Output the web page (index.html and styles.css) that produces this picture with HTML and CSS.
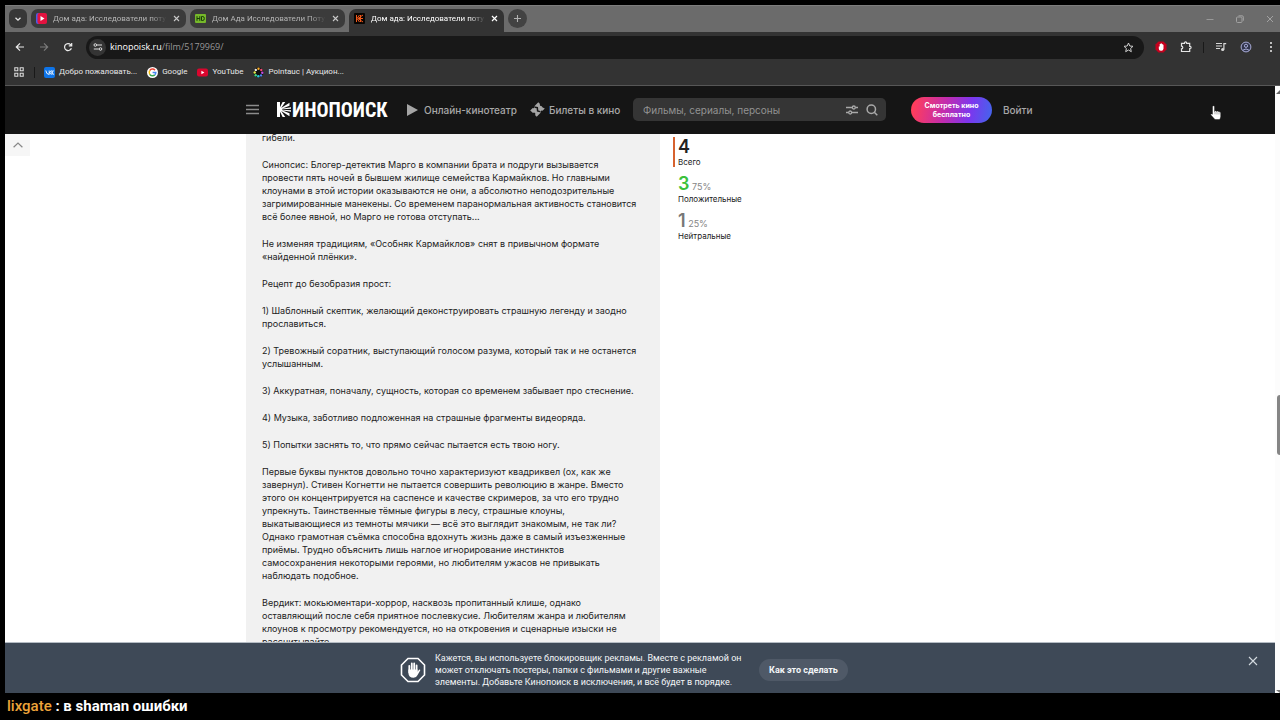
FILE: index.html
```html
<!DOCTYPE html>
<html lang="ru">
<head>
<meta charset="utf-8">
<meta name="viewport" content="width=device-width, initial-scale=1">
<title>Дом ада: Исследователи потустороннего — Кинопоиск</title>
<link rel="stylesheet" href="styles.css">
</head>
<body>
<div class="browser">
  <div class="tabstrip">
    <button class="tab-search" aria-label="Поиск вкладок"><svg width="8" height="8" viewBox="0 0 8 8"><path d="M1.5 2.7 4 5.2l2.500-2.500" fill="none" stroke="#e6e6e6" stroke-width="1.300"/></svg></button>
    <div class="tabs">
      <div class="tab">
        <svg class="favicon" width="11" height="11" viewBox="0 0 11 11"><rect width="8" height="11" rx="2" fill="#4b5ce8"/><rect x="1.500" width="9.500" height="11" rx="2" fill="#e3123f"/><path d="M4.500 3v5l4-2.500z" fill="#fff"/></svg>
        <span class="tab-title">Дом ада: Исследователи поту</span>
        <button class="tab-close" aria-label="Закрыть вкладку"><svg width="7" height="7" viewBox="0 0 7 7"><path d="M1 1l5 5M6 1 1 6" stroke="#c8c8c8" stroke-width="1.100"/></svg></button>
      </div>
      <div class="tab">
        <svg class="favicon" width="11" height="11" viewBox="0 0 11 11"><rect y="1" width="11" height="9" rx="1" fill="#76b82a"/><path d="M2 3.200v4.600M4.800 3.200v4.600M2 5.500h2.800M6.500 3.500v4h1.300q1.500 0 1.500-2t-1.500-2z" fill="none" stroke="#173c08" stroke-width="1"/></svg>
        <span class="tab-title">Дом Ада Исследователи Поту</span>
        <button class="tab-close" aria-label="Закрыть вкладку"><svg width="7" height="7" viewBox="0 0 7 7"><path d="M1 1l5 5M6 1 1 6" stroke="#c8c8c8" stroke-width="1.100"/></svg></button>
      </div>
      <div class="tab tab-active">
        <svg class="favicon" width="11" height="11" viewBox="0 0 11 11"><rect width="11" height="11" rx="1" fill="#080503"/><path d="M2.500 2v7M3 5.500 5.500 2M3 5.500 5.500 9M4 5.500 9 2M4 5.500h5M4 5.500 9 9M6.500 2v7" stroke="#f0581a" stroke-width="1"/></svg>
        <span class="tab-title">Дом ада: Исследователи поту</span>
        <button class="tab-close" aria-label="Закрыть вкладку"><svg width="7" height="7" viewBox="0 0 7 7"><path d="M1 1l5 5M6 1 1 6" stroke="#fff" stroke-width="1.200"/></svg></button>
      </div>
    </div>
    <button class="new-tab" aria-label="Новая вкладка"><svg width="9" height="9" viewBox="0 0 9 9"><path d="M4.500 1v7M1 4.500h7" stroke="#b0b0b0" stroke-width="1.100"/></svg></button>
    <div class="window-controls">
      <button aria-label="Свернуть"><svg width="8" height="8" viewBox="0 0 8 8"><path d="M.5 4.500h7" stroke="#999"/></svg></button>
      <button aria-label="Восстановить"><svg width="8" height="8" viewBox="0 0 8 8"><rect x=".5" y="2" width="5.500" height="5.500" rx="1" fill="none" stroke="#a2a2a2"/><path d="M2.500.8h3.500q1.400 0 1.400 1.400v3.500" fill="none" stroke="#a2a2a2"/></svg></button>
      <button aria-label="Закрыть окно"><svg width="8" height="8" viewBox="0 0 8 8"><path d="M1 1l6 6M7 1 1 7" stroke="#a2a2a2" stroke-width="1"/></svg></button>
    </div>
  </div>

  <div class="toolbar">
    <div class="nav-buttons">
      <button aria-label="Назад"><svg width="10" height="10" viewBox="0 0 10 10"><path d="M9 5H1.500M5 1.300 1.300 5 5 8.700" fill="none" stroke="#ececec" stroke-width="1.200"/></svg></button>
      <button aria-label="Вперёд"><svg width="10" height="10" viewBox="0 0 10 10"><path d="M1 5h7.500M5 1.300 8.700 5 5 8.700" fill="none" stroke="#7d7d7d" stroke-width="1.100"/></svg></button>
      <button aria-label="Обновить"><svg width="10" height="10" viewBox="0 0 10 10"><path d="M8.400 6.200A3.500 3.500 0 1 1 7.600 2.600L8.700 3.700M8.700.9v2.900H5.800" fill="none" stroke="#ececec" stroke-width="1.200"/></svg></button>
    </div>
    <div class="omnibox">
      <button class="site-info" aria-label="Сведения о сайте"><svg width="10" height="8" viewBox="0 0 10 8"><path d="M4 2h5M.8 6h5" stroke="#dedede" stroke-width="1.100"/><circle cx="2.300" cy="2" r="1.300" fill="#343434" stroke="#dedede"/><circle cx="7.500" cy="6" r="1.300" fill="#343434" stroke="#dedede"/></svg></button>
      <div class="url"><b>kinopoisk.ru</b>/film/5179969/</div>
      <button class="star" aria-label="Добавить в закладки"><svg width="11" height="11" viewBox="0 0 11 11"><path d="m5.500 1 1.300 3 3.200.3-2.400 2.200.7 3.200-2.800-1.700-2.800 1.700.7-3.200L1 4.300 4.200 4z" fill="none" stroke="#d0d0d0" stroke-width="1"/></svg></button>
    </div>
    <div class="extensions">
      <button aria-label="Блокировщик рекламы"><svg width="12" height="12" viewBox="0 0 12 12"><path d="M3.500.5h5l3 3v5l-3 3h-5l-3-3v-5z" fill="#c4001d"/><path d="M3.800 5.500v2.200q0 2 2 2h.7q1.700 0 2-2V3.800H7.700V2.900h-1v-.6h-1v.7h-1v2.500z" fill="#fff"/></svg></button>
      <button aria-label="Расширения"><svg width="12" height="12" viewBox="0 0 12 12"><path d="M1.500 2.300h3V2a1.100 1.100 0 0 1 2.200 0v.3h3v3H10a1.100 1.100 0 0 1 0 2.200h-.3v3H1.500V7.800a1.300 1.300 0 0 0 0-2.600z" fill="none" stroke="#e5e5e5" stroke-width="1.200"/></svg></button>
      <span class="divider"></span>
      <button aria-label="Управление медиа"><svg width="12" height="12" viewBox="0 0 12 12"><path d="M1 2.500h6M1 5h6M1 7.500h4" stroke="#d8d8d8" stroke-width="1.200"/><circle cx="7.700" cy="8.500" r="1.600" fill="#d8d8d8"/><path d="M8.900 8.500V2.700h2.300" fill="none" stroke="#d8d8d8" stroke-width="1.200"/></svg></button>
      <button aria-label="Профиль"><svg width="12" height="12" viewBox="0 0 12 12"><circle cx="6" cy="6" r="4.900" fill="#30344c" stroke="#a9acd8"/><circle cx="6" cy="4.800" r="1.600" fill="none" stroke="#a9acd8"/><path d="M2.700 9.300q3.300-2.700 6.600 0" fill="none" stroke="#a9acd8"/></svg></button>
      <button aria-label="Меню браузера"><svg width="12" height="12" viewBox="0 0 12 12"><g fill="#eee"><circle cx="6" cy="2" r="1"/><circle cx="6" cy="6" r="1"/><circle cx="6" cy="10" r="1"/></g></svg></button>
    </div>
  </div>

  <nav class="bookmarks" aria-label="Закладки">
    <button class="apps" aria-label="Приложения"><svg width="10" height="10" viewBox="0 0 10 10"><path d="M.8.800h3v3h-3zM6.200.800h3v3h-3zM.8 6.200h3v3h-3zM6.200 6.200h3v3h-3z" fill="none" stroke="#dcdcdc" stroke-width="1.100"/></svg></button>
    <span class="divider"></span>
    <a href="#"><svg width="11" height="11" viewBox="0 0 11 11"><rect width="11" height="11" rx="2" fill="#0e74e8"/><path d="M1.800 3.500q.4 3.800 3.400 4V3.500M5.400 5.500q1.300-.2 1.700-2M5.400 5.500q1.400.3 1.800 2M8 3.300v4.400M9.600 3.500 8.200 5.500l1.500 2.200" fill="none" stroke="#fff" stroke-width=".9"/></svg>Добро пожаловать...</a>
    <a href="#"><svg width="11" height="11" viewBox="0 0 11 11"><circle cx="5.500" cy="5.500" r="5.500" fill="#fff"/><g fill="none" stroke-width="1.500"><path d="M8 3.200A3.300 3.300 0 0 0 2.700 3.700" stroke="#ea4335"/><path d="M2.700 3.700a3.300 3.300 0 0 0 0 3.600" stroke="#fbbc05"/><path d="M2.700 7.300A3.300 3.300 0 0 0 7.800 7.900" stroke="#34a853"/><path d="M7.800 7.900a3.300 3.300 0 0 0 1-2.300H5.600" stroke="#4285f4"/></g></svg>Google</a>
    <a href="#"><svg width="11" height="11" viewBox="0 0 11 11"><rect y="1.500" width="11" height="8" rx="2" fill="#d9062e"/><path d="M4.400 3.800v3.400l3-1.700z" fill="#fff"/></svg>YouTube</a>
    <a href="#"><svg width="11" height="11" viewBox="0 0 11 11"><circle cx="5.500" cy="5.500" r="5" fill="#111"/><circle cx="5.500" cy="1.800" r="1.200" fill="#f5a623"/><circle cx="8.300" cy="3" r="1.200" fill="#f04b76"/><circle cx="9.300" cy="5.700" r="1.200" fill="#c44be0"/><circle cx="8" cy="8.400" r="1.200" fill="#4b83f0"/><circle cx="5.300" cy="9.300" r="1.200" fill="#28c7e0"/><circle cx="2.700" cy="8.200" r="1.200" fill="#3ddc84"/><circle cx="1.700" cy="5.500" r="1.200" fill="#e7e94a"/><circle cx="2.800" cy="2.900" r="1.200" fill="#eee"/></svg>Pointauc | Аукцион...</a>
  </nav>

  <div class="viewport">
    <div class="page">
      <header class="site-header">
        <div class="container header-row">
          <button class="burger" aria-label="Меню"><svg width="13" height="11" viewBox="0 0 13 11"><path d="M0 1.500h13M0 5.500h13M0 9.500h13" stroke="#8c8c8c" stroke-width="1.500"/></svg></button>
          <a class="logo" href="#" aria-label="Кинопоиск"><svg width="15" height="15" viewBox="0 0 15 15"><path d="M0 0h3v5.300L5.600 0h2.700L4.200 6 12.500.8V3.700L4.800 6.800 14 5.300v1.500L5 7.200v.6l9 .4v1.500L4.800 8.200l7.700 3.100v2.900L4.200 9l4.100 6H5.600L3 9.700V15H0z" fill="#fff"/></svg><span>ИНОПОИСК</span></a>
          <a class="nav-link online" href="#"><svg width="11" height="12" viewBox="0 0 11 12"><path d="M0 0v12l11-6z" fill="#a5a5a5"/></svg>Онлайн-кинотеатр</a>
          <a class="nav-link tickets" href="#"><svg width="15" height="15" viewBox="0 0 15 15"><path d="M8.300.3 10 2a1.400 1.400 0 0 0 1.400 2.100L12.700 5.400 14.800 6.600 12.500 8.800a1.400 1.400 0 0 0-1.900 1.900L6.700 14.700 5 13a1.400 1.400 0 0 0-2-2L.2 8.400 2.700 6a1.400 1.400 0 0 0 1.900-1.900z" fill="#a5a5a5"/><path d="m4.900 5.200 2.400.4.300 3.300 2.400.7" fill="none" stroke="#151515" stroke-width="1.500"/></svg>Билеты в кино</a>
          <form class="search">
            <input type="search" placeholder="Фильмы, сериалы, персоны" aria-label="Фильмы, сериалы, персоны">
            <button type="button" aria-label="Расширенный поиск"><svg width="12" height="12" viewBox="0 0 12 12"><path d="M0 3.500h6M9.500 3.500h2.500M0 8.500h2.500M6 8.500h6" stroke="#a9a9a9" stroke-width="1.300"/><circle cx="7.800" cy="3.500" r="1.500" fill="none" stroke="#a9a9a9" stroke-width="1.300"/><circle cx="4.200" cy="8.500" r="1.500" fill="none" stroke="#a9a9a9" stroke-width="1.300"/></svg></button>
            <button type="submit" aria-label="Найти"><svg width="12" height="12" viewBox="0 0 12 12"><circle cx="5.300" cy="5.300" r="4.200" fill="none" stroke="#a9a9a9" stroke-width="1.500"/><path d="m8.300 8.300 3 3" stroke="#a9a9a9" stroke-width="1.500"/></svg></button>
          </form>
          <button class="watch">Смотреть кино<br>бесплатно</button>
          <a class="login" href="#">Войти</a>
        </div>
      </header>

      <main class="content">
        <button class="collapse" aria-label="Наверх"><svg width="10" height="6" viewBox="0 0 10 6"><path d="M.6 5.200 5 1l4.400 4.200" fill="none" stroke="#888" stroke-width="1.200"/></svg></button>
        <div class="container columns">
          <article class="review">
            <p>гибели.</p>
            <p>Синопсис: Блогер-детектив Марго в компании брата и подруги вызывается<br>провести пять ночей в бывшем жилище семейства Кармайклов. Но главными<br>клоунами в этой истории оказываются не они, а абсолютно неподозрительные<br>загримированные манекены. Со временем паранормальная активность становится<br>всё более явной, но Марго не готова отступать...</p>
            <p>Не изменяя традициям, «Особняк Кармайклов» снят в привычном формате<br>«найденной плёнки».</p>
            <p>Рецепт до безобразия прост:</p>
            <p>1) Шаблонный скептик, желающий деконструировать страшную легенду и заодно<br>прославиться.</p>
            <p>2) Тревожный соратник, выступающий голосом разума, который так и не останется<br>услышанным.</p>
            <p>3) Аккуратная, поначалу, сущность, которая со временем забывает про стеснение.</p>
            <p>4) Музыка, заботливо подложенная на страшные фрагменты видеоряда.</p>
            <p>5) Попытки заснять то, что прямо сейчас пытается есть твою ногу.</p>
            <p>Первые буквы пунктов довольно точно характеризуют квадриквел (ох, как же<br>завернул). Стивен Когнетти не пытается совершить революцию в жанре. Вместо<br>этого он концентрируется на саспенсе и качестве скримеров, за что его трудно<br>упрекнуть. Таинственные тёмные фигуры в лесу, страшные клоуны,<br>выкатывающиеся из темноты мячики — всё это выглядит знакомым, не так ли?<br>Однако грамотная съёмка способна вдохнуть жизнь даже в самый изъезженные<br>приёмы. Трудно объяснить лишь наглое игнорирование инстинктов<br>самосохранения некоторыми героями, но любителям ужасов не привыкать<br>наблюдать подобное.</p>
            <p>Вердикт: мокьюментари-хоррор, насквозь пропитанный клише, однако<br>оставляющий после себя приятное послевкусие. Любителям жанра и любителям<br>клоунов к просмотру рекомендуется, но на откровения и сценарные изыски не<br>рассчитывайте.</p>
          </article>
          <ul class="stats">
            <li class="stat stat-current"><div><b>4</b></div><a href="#">Всего</a></li>
            <li class="stat stat-good"><div><b>3</b> <span>75%</span></div><a href="#">Положительные</a></li>
            <li class="stat stat-neutral"><div><b>1</b> <span>25%</span></div><a href="#">Нейтральные</a></li>
          </ul>
        </div>
      </main>

      <aside class="notice">
        <svg class="notice-icon" width="26" height="26" viewBox="0 0 26 26"><path d="M8 1.500h10L24.500 8v10L18 24.500H8L1.500 18V8z" fill="none" stroke="#fff" stroke-width="1.600"/><path d="M9.300 15.500V8.800M11.800 13V6.500M14.200 13V6.500M16.600 14V8.500" stroke="#fff" stroke-width="1.800" stroke-linecap="round"/><path d="M8.400 12.500h9.100v2.300l1.500-2q1.200-.6 1.300.4L17.600 18q-1.100 2.700-4 2.700-5.200 0-5.200-5.500z" fill="#fff"/></svg>
        <p>Кажется, вы используете блокировщик рекламы. Вместе с рекламой он<br>может отключать постеры, папки с фильмами и другие важные<br>элементы. Добавьте Кинопоиск в исключения, и всё будет в порядке.</p>
        <button class="how-to">Как это сделать</button>
        <button class="notice-close" aria-label="Закрыть"><svg width="10" height="10" viewBox="0 0 10 10"><path d="m1 1 8 8M9 1 1 9" stroke="#d4dae0" stroke-width="1.100"/></svg></button>
      </aside>
      <svg class="pointer" width="12" height="16" viewBox="0 0 12 16"><path d="M2.500 1.500q1-1.500 2 0v5l1-.8 1.200.8 1-.5 1.200.8q1.600-.3 1.800 1.200v3.500q-.2 2-1.200 3H5L.7 9.700q.2-1.400 1.800-.4z" fill="#fff" stroke="#111" stroke-width=".4"/><path d="M5 6.500v2.800M7 7v2.500M9 7.500v2" stroke="#777" stroke-width=".6"/></svg>
    </div>
    <div class="scrollbar">
      <svg width="4" height="4" viewBox="0 0 4 4"><path d="M0 4 4 0v4z" fill="#666"/></svg>
      <div class="thumb"></div>
      <svg width="4" height="3" viewBox="0 0 4 3"><path d="M0 0h4v3z" fill="#777"/></svg>
    </div>
  </div>
</div>
<footer class="chat"><b>lixgate</b> : в shaman ошибки</footer>
</body>
</html>
```
FILE: styles.css
```css
* { box-sizing: border-box; }
body {
  margin: 0;
  height: 100vh;
  display: flex;
  flex-direction: column;
  background: #000;
  font-family: "Inter", sans-serif;
  overflow: hidden;
}
button { padding: 0; border: 0; background: none; font: inherit; color: inherit; display: flex; align-items: center; justify-content: center; flex: none; }
svg { display: block; flex: none; }
a { color: inherit; text-decoration: none; }
p, ul { margin: 0; padding: 0; }

.browser { flex: 1; min-height: 0; margin: 5px 0 0 5px; display: flex; flex-direction: column; background: #333; color: #e8e8e8; font: 8px/12px "Roboto", sans-serif; }

/* Tab strip */
.tabstrip { height: 27px; flex: none; display: flex; align-items: flex-start; padding: 3px 6px 0 4px; background: #6b6b6b; border-top: 1px solid #7d7d7d; }
.tab-search { width: 18px; height: 19px; border-radius: 6px; background: #373737; }
.tabs { display: flex; gap: 4px; margin-left: 4px; }
.tab { display: flex; align-items: center; width: 155px; height: 19px; padding: 0 5px; border-radius: 7px; background: #3b3b3b; color: #b4b4b4; }
.tab-active { height: 23px; padding-bottom: 4px; border-radius: 7px 7px 0 0; background: #333; color: #fff; }
.tab-title { flex: 1; min-width: 0; margin: 0 5px 0 6px; white-space: nowrap; -webkit-mask-image: linear-gradient(90deg, #000 86%, transparent); mask-image: linear-gradient(90deg, #000 86%, transparent); }
.tab-close { width: 9px; height: 9px; }
.new-tab { width: 19px; height: 19px; margin-left: 4px; border-radius: 50%; background: #424242; }
.window-controls { display: flex; gap: 22px; margin-left: auto; padding-top: 6px; }

/* Toolbar */
.toolbar { height: 29px; flex: none; display: flex; align-items: center; padding: 1px 3px 0 10px; }
.nav-buttons { display: flex; gap: 14px; width: 71px; }
.omnibox { flex: 1; display: flex; align-items: center; height: 23px; padding: 0 10px 0 3px; border-radius: 12px; background: #181818; }
.site-info { width: 17px; height: 17px; border-radius: 50%; background: #343434; }
.url { flex: 1; margin-left: 4px; font: 9px/12px "Open Sans", sans-serif; color: #979797; }
.url b { font-weight: 400; color: #fff; }
.extensions { display: flex; align-items: center; gap: 13px; margin-left: 11px; }
.divider { width: 1px; height: 11px; background: #191919; }
.extensions .divider { margin: 0 -2px; }

/* Bookmarks */
.bookmarks { height: 25px; flex: none; display: flex; align-items: center; padding: 0 8px 2px 9px; border-bottom: 1px solid #575757; }
.bookmarks .divider { margin: 0 9px 0 10px; }
.bookmarks a { display: flex; align-items: center; gap: 4px; margin-right: 10px; white-space: nowrap; }

/* Page */
.viewport { flex: 1; min-height: 0; display: flex; }
.page { position: relative; flex: 1; min-width: 0; display: flex; flex-direction: column; background: #fff; color: #222; font-family: "Inter", sans-serif; }
.container { max-width: 788px; margin: 0 auto; }
.site-header { flex: none; height: 48px; background: #151515; color: #a8a8a8; }
.header-row { height: 47px; display: flex; align-items: center; }
.logo { display: flex; align-items: center; margin-left: 18px; width: 110px; color: #fff; font: 700 20px/20px "Liberation Sans Narrow", "Roboto Condensed", "DejaVu Sans Condensed", sans-serif; }
.nav-link { display: flex; align-items: center; white-space: nowrap; font-size: 10px; font-weight: 500; }
.online { gap: 6px; margin-left: 20px; width: 110px; }
.tickets { gap: 4px; margin-left: 13px; width: 90px; }
.search { flex: 1; display: flex; align-items: center; gap: 8px; height: 23px; margin-left: 13px; padding: 0 8px 0 10px; border-radius: 5px; background: #353535; }
.search input { flex: 1; min-width: 0; padding: 0; border: 0; outline: 0; background: none; color: #fff; font: 10px/14px "Inter", sans-serif; }
.search input::placeholder { color: #929292; opacity: 1; }
.watch { width: 81px; height: 26px; margin-left: 25px; border-radius: 13px; background: linear-gradient(100deg, #ff3d5c 5%, #c22cae 42%, #7c36ee 72%, #4167ec); color: #fff; font-size: 7px; line-height: 9px; font-weight: 700; }
.login { width: 31px; margin-left: 11px; font-size: 10px; font-weight: 500; }

.content { position: relative; flex: 1; min-height: 0; overflow: hidden; border-bottom: 1px solid #b5bcc4; }
.collapse { position: absolute; left: 0; top: 0; width: 25px; height: 22px; background: #f6f6f6; }
.columns { display: flex; align-items: flex-start; gap: 13px; }
.review { width: 414px; margin-top: -3px; padding: 0 16px; display: flex; flex-direction: column; gap: 14px; background: #f1f1f1; font-size: 9px; line-height: 13px; white-space: nowrap; }
.stats { list-style: none; display: flex; flex-direction: column; gap: 7px; margin-top: 3px; }
.stat { height: 30px; padding-left: 3px; border-left: 2px solid transparent; font-size: 8px; line-height: 10px; }
.stat-current { border-color: #d7622f; }
.stat div { height: 20px; font-size: 9px; line-height: 20px; color: #858585; }
.stat b { font-size: 18px; font-weight: 600; color: #222; }
.stat-good b { color: #3bc13b; }
.stat-neutral b { color: #777; }

/* Ad blocker notice */
.notice { position: relative; flex: none; height: 50px; display: flex; align-items: center; padding: 3px 0 0 395px; background: #3e4957; color: #f4f6f8; font: 9px/12px "Roboto", sans-serif; white-space: nowrap; }
.notice p { width: 324px; margin-left: 9px; }
.how-to { width: 89px; height: 22px; border-radius: 11px; background: #4f5967; font-weight: 700; }
.notice-close { margin: 0 17px 18px auto; }
.pointer { position: absolute; right: 53px; top: 19px; }

.scrollbar { width: 5px; flex: none; display: flex; flex-direction: column; align-items: flex-end; padding-top: 4px; background: #fcfcfc; }
.thumb { width: 3px; height: 60px; margin: 301px 0 auto; border-radius: 3px 0 0 3px; background: #858585; }

.chat { flex: none; height: 27px; padding-left: 7px; color: #fff; font: 700 15px/27px "Roboto", sans-serif; }
.chat b { font-weight: 500; color: #eda43a; }
```
